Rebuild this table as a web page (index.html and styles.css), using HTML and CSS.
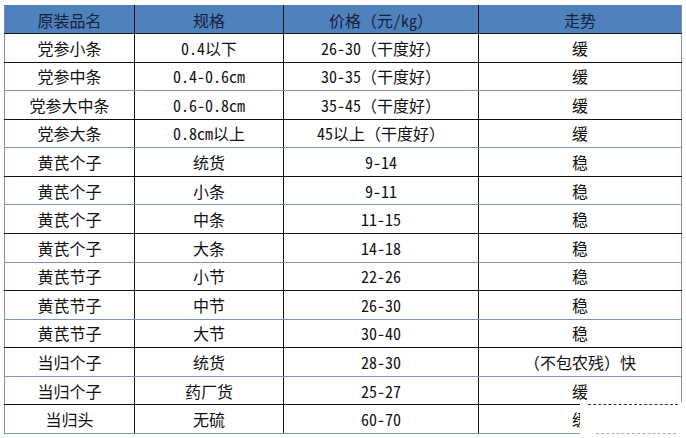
FILE: index.html
```html
<!DOCTYPE html>
<html lang="zh">
<head>
<meta charset="utf-8">
<link rel="stylesheet" href="styles.css">
</head>
<body>
<div class="page">
<table class="price">
<colgroup><col class="c1"><col class="c2"><col class="c3"><col class="c4"></colgroup>
<thead>
<tr class="head"><th>原装品名</th><th>规格</th><th>价格（元/kg）</th><th>走势</th></tr>
</thead>
<tbody>
<tr class="dk"><td>党参小条</td><td>0.4以下</td><td>26-30（干度好）</td><td>缓</td></tr>
<tr class="bl"><td>党参中条</td><td>0.4-0.6cm</td><td>30-35（干度好）</td><td>缓</td></tr>
<tr class="dk"><td>党参大中条</td><td>0.6-0.8cm</td><td>35-45（干度好）</td><td>缓</td></tr>
<tr class="bl"><td>党参大条</td><td>0.8cm以上</td><td>45以上（干度好）</td><td>缓</td></tr>
<tr class="dk"><td>黄芪个子</td><td>统货</td><td>9-14</td><td>稳</td></tr>
<tr class="bl"><td>黄芪个子</td><td>小条</td><td>9-11</td><td>稳</td></tr>
<tr class="dk"><td>黄芪个子</td><td>中条</td><td>11-15</td><td>稳</td></tr>
<tr class="bl"><td>黄芪个子</td><td>大条</td><td>14-18</td><td>稳</td></tr>
<tr class="dk"><td>黄芪节子</td><td>小节</td><td>22-26</td><td>稳</td></tr>
<tr class="bl"><td>黄芪节子</td><td>中节</td><td>26-30</td><td>稳</td></tr>
<tr class="dk"><td>黄芪节子</td><td>大节</td><td>30-40</td><td>稳</td></tr>
<tr class="bl"><td>当归个子</td><td>统货</td><td>28-30</td><td>（不包农残）快</td></tr>
<tr class="dk"><td>当归个子</td><td>药厂货</td><td>25-27</td><td>缓</td></tr>
<tr class="bl"><td>当归头</td><td>无硫</td><td>60-70</td><td>缓</td></tr>
</tbody>
</table>
<div class="mask"><span class="mask-top"></span><span class="mask-bottom"></span></div>
</div>
</body>
</html>
```

FILE: styles.css
```css
html, body {
  margin: 0;
  padding: 0;
  background: #fff;
}
.page {
  position: relative;
  width: 686px;
  height: 438px;
  padding: 5px 0 0 4px;
  box-sizing: border-box;
  overflow: hidden;
}
.price {
  border-collapse: collapse;
  table-layout: fixed;
  width: 677px;
  font-family: "Noto Sans Mono CJK SC", "Noto Sans CJK SC", monospace;
  font-size: 16px;
  color: #111;
  border-left: 1px solid #7d93b4;
  border-right: 1px solid #7d93b4;
}
.c1 { width: 130px; }
.c2 { width: 149px; }
.c3 { width: 195px; }
.c4 { width: 203px; }
.price th, .price td {
  padding: 0;
  text-align: center;
  vertical-align: middle;
  border-left: 1px solid #111;
  border-right: 1px solid #111;
  line-height: 20px;
  white-space: nowrap;
}
.price th:first-child, .price td:first-child { border-left: 1px solid #7d93b4; }
.price th:last-child, .price td:last-child { border-right: 1px solid #7d93b4; }
.head th {
  height: 27px;
  background: #4f81bd;
  font-weight: normal;
  color: #14213a;
  border-top: 1px solid #4f81bd;
  border-bottom: 1px solid #1a1a1a;
}
.price tbody tr { height: 28.57px; }
.dk td { border-bottom: 1px solid #111; }
.bl td { border-bottom: 1px solid #7d93b4; }
.mask {
  position: absolute;
  left: 580px;
  top: 402px;
  width: 106px;
  height: 36px;
  background: #fff;
}
.mask-top {
  position: absolute;
  left: 8px;
  top: 2px;
  width: 90px;
  border-top: 1px dashed #333;
}
.mask-bottom {
  position: absolute;
  left: 16px;
  top: 31px;
  width: 80px;
  border-top: 1px dashed #9fb0c8;
}
```
